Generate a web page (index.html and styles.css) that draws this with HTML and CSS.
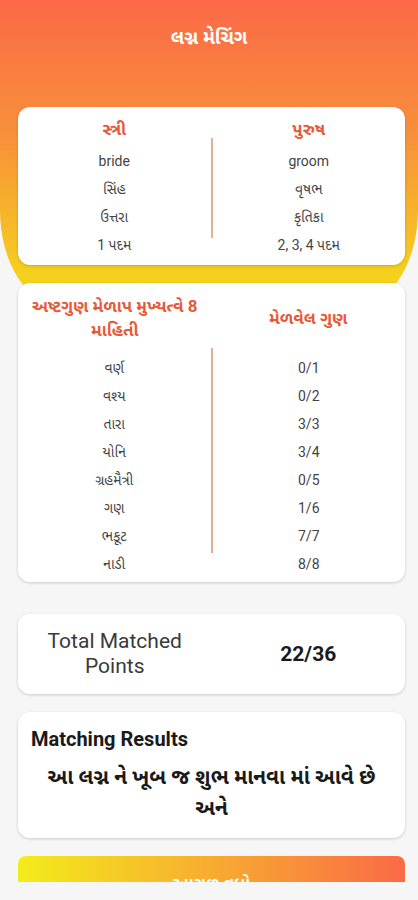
FILE: index.html
```html
<!DOCTYPE html>
<html lang="gu">
<head>
  <meta charset="UTF-8" />
  <meta name="viewport" content="width=device-width, initial-scale=1.0" />
  <title>લગ્ન મેચિંગ</title>
  <link rel="stylesheet" href="styles.css">
</head>
<body>
  <div class="screen">
    <header class="hero">
      <h1>લગ્ન મેચિંગ</h1>
    </header>

    <div class="content">
      <section class="card pair">
        <div class="col">
          <h2>સ્ત્રી</h2>
          <p>bride</p>
          <p>સિંહ</p>
          <p>ઉત્તરા</p>
          <p>1 પદમ</p>
        </div>
        <div class="divider short"></div>
        <div class="col">
          <h2>પુરુષ</h2>
          <p>groom</p>
          <p>વૃષભ</p>
          <p>કૃતિકા</p>
          <p>2, 3, 4 પદમ</p>
        </div>
      </section>

      <section class="card guna">
        <div class="guna-head">
          <h2>અષ્ટગુણ મેળાપ મુખ્યત્વે 8 માહિતી</h2>
          <h2>મેળવેલ ગુણ</h2>
        </div>
        <div class="guna-body">
          <div class="col">
            <p>વર્ણ</p>
            <p>વશ્ય</p>
            <p>તારા</p>
            <p>યોનિ</p>
            <p>ગ્રહમૈત્રી</p>
            <p>ગણ</p>
            <p>ભકૂટ</p>
            <p>નાડી</p>
          </div>
          <div class="divider tall"></div>
          <div class="col">
            <p>0/1</p>
            <p>0/2</p>
            <p>3/3</p>
            <p>3/4</p>
            <p>0/5</p>
            <p>1/6</p>
            <p>7/7</p>
            <p>8/8</p>
          </div>
        </div>
      </section>

      <section class="card total">
        <div class="total-label">Total Matched Points</div>
        <div class="total-value">22/36</div>
      </section>

      <section class="card result">
        <h3>Matching Results</h3>
        <p>આ લગ્ન ને ખૂબ જ શુભ માનવા માં આવે છે અને</p>
      </section>

      <button class="next-btn">આગળ વધો</button>
    </div>
  </div>
</body>
</html>
```

FILE: styles.css
```css
body {
  margin: 0;
  background-color: #f6f6f6;
  font-family: Roboto, "Noto Sans Gujarati", "Lohit Gujarati", sans-serif;
  color: #444;
}
.screen {
  height: 882px;
  overflow: hidden;
}
.hero {
  height: 305px;
  background: linear-gradient(to bottom, #fb6947, #f8913a 45%, #f5d01d 90%);
  border-radius: 0 0 60px 60px / 0 0 95px 95px;
}
.hero h1 {
  margin: 0;
  padding-top: 26px;
  text-align: center;
  color: white;
  font-size: 19px;
  line-height: 24px;
  font-weight: bold;
}
.content {
  margin-top: -198px;
  padding: 0 13px 0 18px;
}
.card {
  background: white;
  border-radius: 12px;
  box-shadow: 0 1px 3px rgba(0, 0, 0, 0.18);
  margin-bottom: 18px;
}
.card h2 {
  margin: 0;
  color: #e65a3a;
  font-size: 17px;
  line-height: 24px;
  font-weight: bold;
  text-align: center;
}
.col p {
  margin: 0;
  font-size: 14px;
  line-height: 28px;
  text-align: center;
}
.divider {
  width: 2px;
  background-color: #e3ad98;
}
.pair {
  display: grid;
  grid-template-columns: 1fr 2px 1fr;
  align-items: center;
  padding: 10px 0 6px;
}
.pair h2 {
  margin-bottom: 6px;
}
.divider.short {
  height: 100px;
}
.guna {
  padding: 11px 0 4px;
  margin-bottom: 32px;
}
.guna-head {
  display: grid;
  grid-template-columns: 1fr 1fr;
  align-items: center;
  margin-bottom: 12px;
}
.guna-head h2 {
  padding: 0 8px;
}
.guna-body {
  display: grid;
  grid-template-columns: 1fr 2px 1fr;
  align-items: start;
}
.divider.tall {
  height: 205px;
  margin-top: -6px;
}
.total {
  display: grid;
  grid-template-columns: 1fr 1fr;
  align-items: center;
  padding: 15px 0;
}
.total-label {
  padding: 0 20px;
  font-size: 21px;
  line-height: 25px;
  color: #3a3a3a;
  text-align: center;
}
.total-value {
  font-size: 21px;
  font-weight: bold;
  color: #1a1a1a;
  text-align: center;
}
.result {
  padding: 14px 13px 14px;
}
.result h3 {
  margin: 0 0 10px;
  font-size: 20px;
  line-height: 26px;
  color: #1a1a1a;
}
.result p {
  margin: 0;
  font-size: 21px;
  line-height: 31px;
  font-weight: bold;
  color: #1a1a1a;
  text-align: center;
}
.next-btn {
  display: block;
  width: 100%;
  height: 56px;
  border: none;
  border-radius: 8px;
  background: linear-gradient(to right, #f3ec1a, #f7b92c 40%, #fa6a46);
  color: white;
  font-family: inherit;
  font-size: 17px;
  font-weight: bold;
}
```
